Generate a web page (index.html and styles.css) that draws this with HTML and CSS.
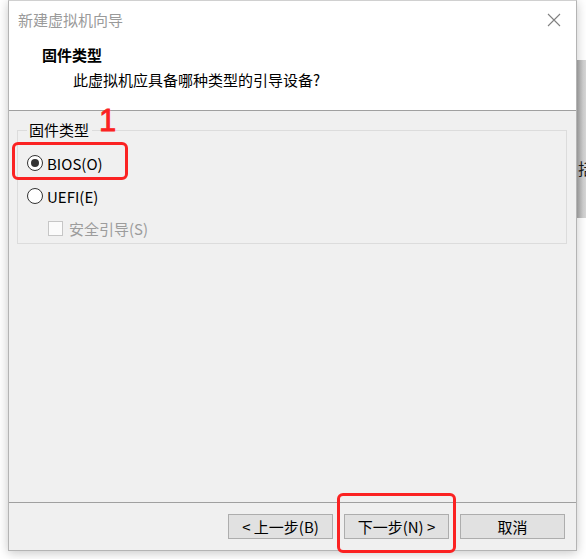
FILE: index.html
```html
<!DOCTYPE html>
<html lang="zh-CN">
<head>
    <meta charset="UTF-8">
    <title>新建虚拟机向导</title>
    <link rel="stylesheet" href="styles.css">
</head>
<body>
    <div class="backwin"><span>括</span></div>

    <div class="dialog">
        <div class="titlebar">
            <span class="title">新建虚拟机向导</span>
            <svg class="close" width="14" height="14" viewBox="0 0 14 14">
                <path d="M1 1 L13 13 M13 1 L1 13" stroke="#808080" stroke-width="1.1" fill="none"/>
            </svg>
        </div>

        <div class="header">
            <div class="heading">固件类型</div>
            <div class="subtitle">此虚拟机应具备哪种类型的引导设备?</div>
        </div>

        <div class="content">
            <fieldset class="group">
                <legend>固件类型</legend>
                <div class="option">
                    <span class="radio checked"></span>
                    <span>BIOS(O)</span>
                </div>
                <div class="option">
                    <span class="radio"></span>
                    <span>UEFI(E)</span>
                </div>
                <div class="option sub disabled">
                    <span class="check"></span>
                    <span>安全引导(S)</span>
                </div>
            </fieldset>
        </div>

        <div class="footer">
            <button class="btn">&lt; 上一步(B)</button>
            <button class="btn">下一步(N) &gt;</button>
            <button class="btn">取消</button>
        </div>
    </div>

    <!-- annotations drawn over the screenshot -->
    <div class="mark-num">1</div>
    <div class="mark mark-bios"></div>
    <div class="mark mark-next"></div>
</body>
</html>
```

FILE: styles.css
```css
html, body {
    margin: 0;
    height: 100%;
}
body {
    background: #fff;
    font-family: "Noto Sans CJK SC", "Noto Sans", sans-serif;
    font-size: 15px;
    color: #000;
    position: relative;
    overflow: hidden;
    padding-left: 8px;
}
.backwin {
    position: absolute;
    left: 577px;
    top: 60px;
    width: 9px;
    height: 158px;
    background: linear-gradient(to right, #a9a9a9, #cfcfcf 6px, #d6d6d6);
    overflow: hidden;
}
.backwin span {
    position: absolute;
    left: 1px;
    top: 98px;
    font-size: 16px;
    line-height: 20px;
    color: #1a1a1a;
}
.dialog {
    position: relative;
    width: 569px;
    height: 551px;
    box-sizing: border-box;
    border: 1px solid #b4b4b4;
    border-top-color: #d0d0d0;
    background: #f0f0f0;
    box-shadow: 0 2px 10px rgba(0, 0, 0, 0.22);
    display: flex;
    flex-direction: column;
}
.titlebar {
    height: 37px;
    background: #fff;
    display: flex;
    align-items: center;
    justify-content: space-between;
    padding: 0 15px 0 9px;
}
.title {
    color: #9a9a9a;
    line-height: 37px;
}
.close {
    display: block;
}
.header {
    background: #fff;
    padding: 7px 0 20px 33px;
    border-bottom: 1px solid #a0a0a0;
}
.heading {
    font-weight: bold;
    line-height: 20px;
}
.subtitle {
    line-height: 20px;
    margin-top: 5px;
    padding-left: 31px;
}
.content {
    flex: 1;
}
.group {
    margin: 9px 9px 0 8px;
    padding: 13px 10px 5px 9px;
    border: 1px solid #dcdcdc;
    min-width: 0;
}
.group legend {
    padding: 0 3px 0 2px;
    margin-left: 0;
    line-height: 20px;
}
.option {
    display: flex;
    align-items: center;
    height: 20px;
    gap: 4px;
}
.option + .option {
    margin-top: 13px;
}
.option.sub {
    margin-top: 12px;
    padding-left: 21px;
}
.disabled {
    color: #9c9c9c;
}
.radio {
    width: 14px;
    height: 14px;
    border: 1px solid #333;
    border-radius: 50%;
    background: #fff;
    display: flex;
    align-items: center;
    justify-content: center;
}
.radio.checked::after {
    content: "";
    width: 8px;
    height: 8px;
    border-radius: 50%;
    background: #333;
}
.check {
    width: 13px;
    height: 13px;
    border: 1px solid #c6c6c6;
    background: #fbfbfb;
    margin-right: 2px;
}
.footer {
    border-top: 1px solid #a0a0a0;
    padding: 11px 11px 11px 0;
    display: flex;
    justify-content: flex-end;
    gap: 11px;
}
.btn {
    width: 105px;
    height: 25px;
    box-sizing: border-box;
    border: 1px solid #adadad;
    background: #e1e1e1;
    font-family: inherit;
    font-size: 15px;
    line-height: 21px;
    color: #000;
    padding: 0;
}
.mark {
    position: absolute;
    border: 3px solid #fb2222;
    border-radius: 6px;
    box-sizing: border-box;
}
.mark-bios {
    left: 12px;
    top: 142px;
    width: 116px;
    height: 38px;
}
.mark-next {
    left: 337px;
    top: 493px;
    width: 119px;
    height: 60px;
}
.mark-num {
    position: absolute;
    left: 99px;
    top: 103px;
    font-family: "Liberation Sans", sans-serif;
    font-size: 31px;
    line-height: 36px;
    color: #fb2222;
    -webkit-text-stroke: 0.8px #fb2222;
}
```
